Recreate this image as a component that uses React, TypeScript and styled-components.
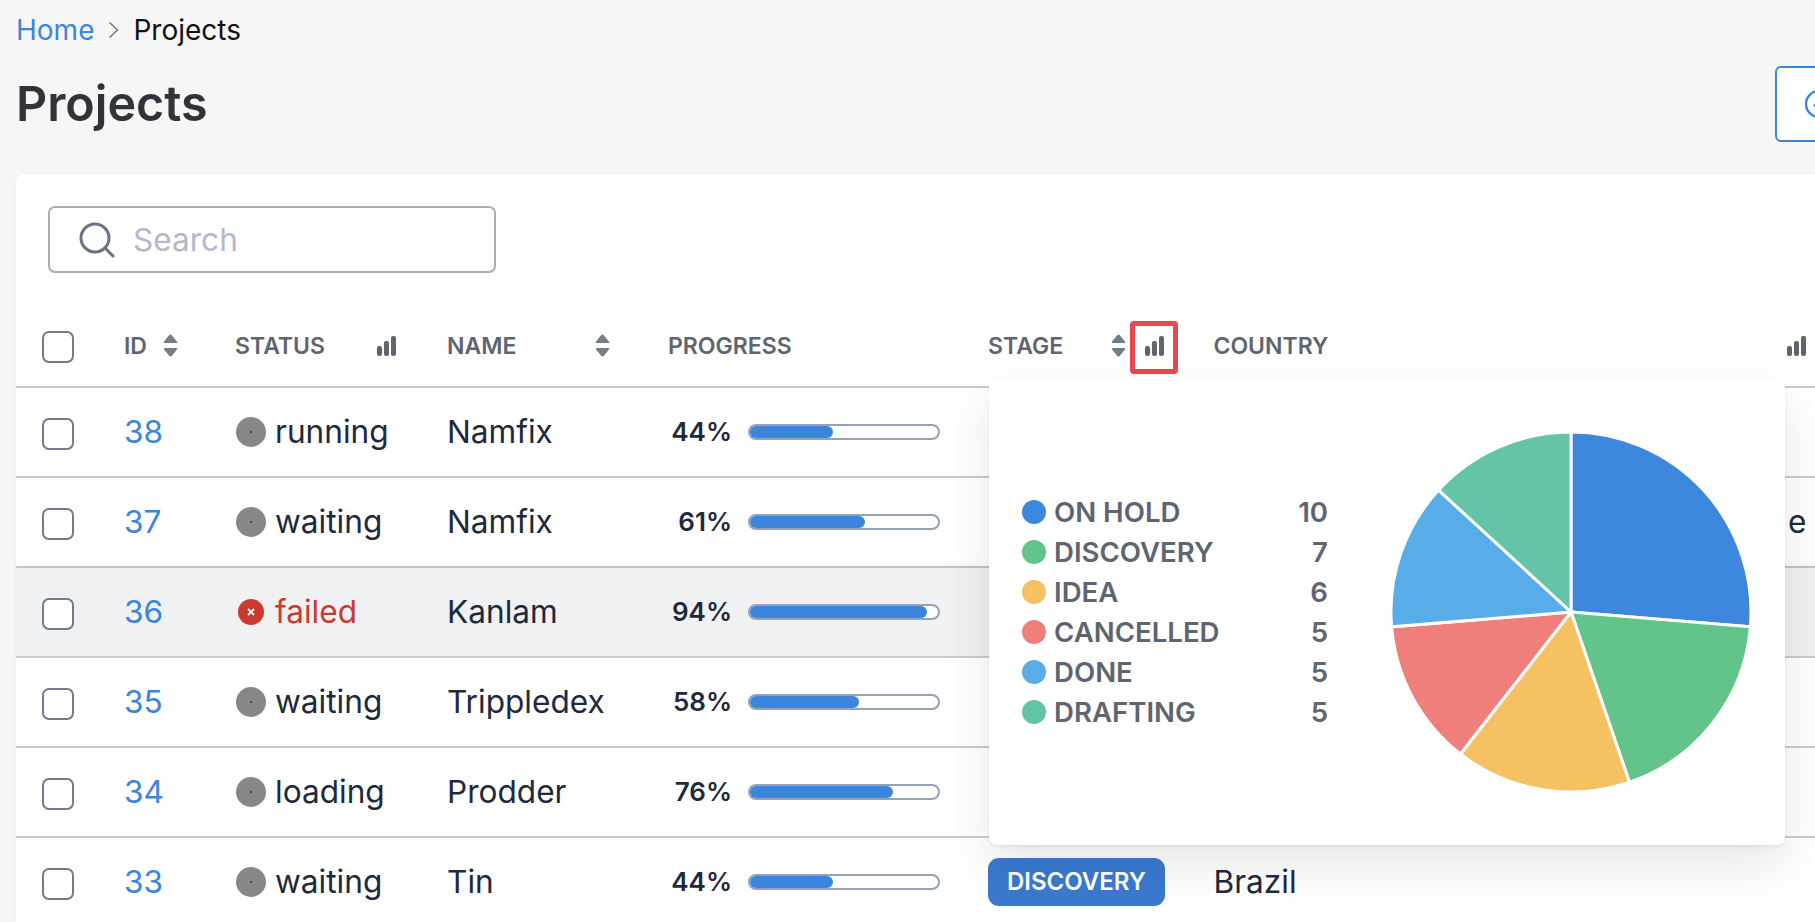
import React from "react"
import styled, { createGlobalStyle } from "styled-components"

const GlobalStyle = createGlobalStyle`
  html, body {
    margin: 0;
    height: 100%;
    overflow: hidden;
    background: #f6f6f6;
  }
  body {
    font-family: Inter, "Noto Sans", "Liberation Sans", sans-serif;
    color: #1e293b;
  }
`

const GRID = "108px 111px 212px 221px 320px 225.5px 643px"

const Page = styled.div`
  width: 1900px;
  padding: 14px 0 0 16px;
  box-sizing: border-box;
`

const Crumbs = styled.nav`
  display: flex;
  align-items: center;
  gap: 14px;
  height: 32px;
  font-size: 28px;
  line-height: 32px;
`

const CrumbLink = styled.a`
  color: #3c85dd;
`

const CrumbCurrent = styled.span`
  color: #111;
`

const TitleRow = styled.div`
  display: flex;
  justify-content: space-between;
  align-items: flex-start;
  height: 128px;
  padding-top: 20px;
  box-sizing: border-box;
`

const Title = styled.h1`
  margin: 10px 0 0;
  font-size: 48.4px;
  line-height: 56px;
  font-weight: 600;
  color: #303339;
`

const ActionButton = styled.button`
  display: flex;
  align-items: center;
  flex: none;
  width: 125px;
  height: 76px;
  padding: 0 0 0 27px;
  box-sizing: border-box;
  border: 2px solid #3c85dd;
  border-radius: 6px;
  background: #fff;
  color: #3c85dd;
`

const Card = styled.section`
  background: #fff;
  border-radius: 8px;
  box-shadow: 0 1px 4px rgba(0, 0, 0, 0.04);
`

const Toolbar = styled.div`
  padding: 32px 0 35px 32px;
`

const SearchBox = styled.div`
  display: flex;
  align-items: center;
  gap: 18px;
  width: 448px;
  height: 67px;
  padding-left: 29px;
  box-sizing: border-box;
  border: 2px solid #a8adb6;
  border-radius: 7px;
  color: #6b7280;
`

const Placeholder = styled.span`
  font-size: 31.6px;
  color: #b6b6cc;
`

const Row = styled.div<{ $head?: boolean; $active?: boolean }>`
  display: grid;
  grid-template-columns: ${GRID};
  align-items: center;
  height: ${(p) => (p.$head ? 80 : 90)}px;
  box-sizing: border-box;
  border-bottom: 2px solid #cacad0;
  background: ${(p) => (p.$active ? "#f0f1f3" : "transparent")};
  box-shadow: ${(p) => (p.$active ? "0 -6px 10px -4px rgba(0, 0, 0, 0.06)" : "none")};
`

const HeadCell = styled.div<{ $pad?: number }>`
  position: relative;
  display: flex;
  align-items: center;
  justify-content: space-between;
  padding-right: ${(p) => p.$pad ?? 0}px;
  padding-bottom: 3px;
  font-size: 23px;
  font-weight: 600;
  color: #5f6570;
`

const CheckCell = styled.div<{ $body?: boolean }>`
  padding-left: 26px;
  padding-top: ${(p) => (p.$body ? 3 : 0)}px;
`

const Check = styled.span`
  display: block;
  width: 32px;
  height: 32px;
  box-sizing: border-box;
  border: 2px solid #727a8b;
  border-radius: 7px;
  background: #fff;
`

const IconPair = styled.span`
  display: flex;
  align-items: center;
  gap: 19px;
`

const Highlight = styled.span`
  position: relative;
  display: flex;

  &::after {
    content: "";
    position: absolute;
    left: -15px;
    top: -15px;
    width: 48px;
    height: 53px;
    box-sizing: border-box;
    border: 5px solid #e8484e;
    border-radius: 4px;
  }
`

const IdLink = styled.a`
  padding-bottom: 2px;
  font-size: 31.6px;
  color: #3c85dd;
`

const Status = styled.div<{ $failed?: boolean }>`
  display: flex;
  align-items: center;
  gap: 9px;
  padding-bottom: 2px;
  font-size: 31.6px;
  color: ${(p) => (p.$failed ? "#cc3a2f" : "#1e293b")};
`

const StatusDot = styled.span<{ $failed?: boolean }>`
  display: flex;
  align-items: center;
  justify-content: center;
  width: ${(p) => (p.$failed ? 26 : 30)}px;
  height: ${(p) => (p.$failed ? 26 : 30)}px;
  margin: 2px ${(p) => (p.$failed ? 2 : 0)}px 0 ${(p) => (p.$failed ? 3 : 1)}px;
  border-radius: 50%;
  background: ${(p) => (p.$failed ? "#cc3a2f" : "#878787")};
`

const Pip = styled.span`
  width: 2px;
  height: 2px;
  border-radius: 50%;
  background: #3a3a3a;
`

const Text = styled.div<{ $end?: boolean }>`
  padding-bottom: 2px;
  font-size: 31.6px;
  white-space: nowrap;
  text-align: ${(p) => (p.$end ? "right" : "left")};
  padding-right: ${(p) => (p.$end ? 50 : 0)}px;
`

const ProgressCell = styled.div`
  display: flex;
  align-items: center;
  gap: 16px;
`

const Percent = styled.span`
  width: 64px;
  padding-bottom: 2px;
  text-align: right;
  font-size: 26px;
  font-weight: 600;
  white-space: nowrap;
`

const Track = styled.div`
  width: 192px;
  height: 16px;
  box-sizing: border-box;
  border: 2px solid #94a1b8;
  border-radius: 8px;
  background: #fff;
`

const Fill = styled.div`
  height: 12px;
  border-radius: 6px;
  background: #3c85dd;
`

const StageChip = styled.span`
  display: inline-block;
  padding: 0 19px;
  height: 48px;
  line-height: 48px;
  border-radius: 11px;
  background: #397ad0;
  color: #fff;
  font-size: 24px;
  font-weight: 600;
`

const Popover = styled.div`
  position: absolute;
  left: 1px;
  top: 47px;
  z-index: 5;
  display: flex;
  align-items: center;
  justify-content: space-between;
  width: 796px;
  height: 466px;
  padding: 0 33px;
  box-sizing: border-box;
  background: #fff;
  border-radius: 8px;
  box-shadow: 0 2px 3px rgba(0, 0, 0, 0.06), 0 20px 50px rgba(0, 0, 0, 0.1);
`

const Legend = styled.ul`
  list-style: none;
  margin: 0;
  padding: 0;
  width: 306px;
`

const LegendRow = styled.li`
  display: flex;
  align-items: center;
  height: 40px;
  gap: 8px;
  font-size: 27.6px;
  font-weight: 600;
  color: #5f6570;
`

const LegendDot = styled.span<{ $color: string }>`
  width: 24px;
  height: 24px;
  border-radius: 50%;
  background: ${(p) => p.$color};
`

const LegendCount = styled.span`
  margin-left: auto;
`

const BarsIcon = () => (
  <svg width="19" height="20" viewBox="0 0 19 20" fill="currentColor">
    <rect x="0" y="10" width="5" height="10" rx="2" />
    <rect x="7" y="5" width="5" height="15" rx="2" />
    <rect x="14" y="0" width="5" height="20" rx="2" />
  </svg>
)

const SortIcon = () => (
  <svg width="15" height="23" viewBox="0 0 15 23" fill="#757c8a">
    <path d="M6.4 1 1 7.4c-.6.8-.1 1.6.8 1.6h11.4c.9 0 1.4-.8.8-1.6L8.6 1c-.6-.7-1.6-.7-2.2 0z" />
    <path d="M6.4 22 1 15.6c-.6-.8-.1-1.6.8-1.6h11.4c.9 0 1.4.8.8 1.6L8.6 22c-.6.7-1.6.7-2.2 0z" />
  </svg>
)

const ChevronIcon = () => (
  <svg width="11" height="18" viewBox="0 0 11 18" fill="none" stroke="#6b7280" strokeWidth="1.4">
    <path d="M1.5 1.5 9.5 9l-8 7.5" />
  </svg>
)

const SearchIcon = () => (
  <svg width="36" height="36" viewBox="0 0 36 36" fill="none" stroke="currentColor" strokeWidth="3">
    <circle cx="16" cy="16" r="14" />
    <path d="M26 26l8 8" strokeLinecap="round" />
  </svg>
)

const CircleIcon = () => (
  <svg width="30" height="30" viewBox="0 0 30 30" fill="none" stroke="currentColor" strokeWidth="2.4">
    <circle cx="15" cy="15" r="13" />
    <path d="M10 15.5l3.5 3.5 6.5-7" />
  </svg>
)

const slices = [
  { label: "ON HOLD", value: 10, color: "#3d87dd" },
  { label: "DISCOVERY", value: 7, color: "#62c48a" },
  { label: "IDEA", value: 6, color: "#f6c163" },
  { label: "CANCELLED", value: 5, color: "#f07e7b" },
  { label: "DONE", value: 5, color: "#58ade8" },
  { label: "DRAFTING", value: 5, color: "#63c4a8" },
]

const PieChart = () => {
  const total = slices.reduce((sum, s) => sum + s.value, 0)
  const r = 180
  let angle = -Math.PI / 2
  return (
    <svg width="362" height="362" viewBox="-181 -181 362 362">
      {slices.map((s) => {
        const next = angle + (s.value / total) * Math.PI * 2
        const d = `M0 0L${r * Math.cos(angle)} ${r * Math.sin(angle)}A${r} ${r} 0 0 1 ${r * Math.cos(next)} ${r * Math.sin(next)}Z`
        angle = next
        return <path key={s.label} d={d} fill={s.color} stroke="#fff" strokeWidth="3" />
      })}
    </svg>
  )
}

// row 37's country is hidden by the popover, only its last letter shows
const rows = [
  { id: 38, status: "running", name: "Namfix", progress: 44 },
  { id: 37, status: "waiting", name: "Namfix", progress: 61, tail: "e" },
  { id: 36, status: "failed", name: "Kanlam", progress: 94 },
  { id: 35, status: "waiting", name: "Trippledex", progress: 58 },
  { id: 34, status: "loading", name: "Prodder", progress: 76 },
  { id: 33, status: "waiting", name: "Tin", progress: 44, stage: "DISCOVERY", country: "Brazil" },
]

const App: React.FC = () => (
  <>
    <GlobalStyle />
    <Page>
      <Crumbs>
        <CrumbLink>Home</CrumbLink>
        <ChevronIcon />
        <CrumbCurrent>Projects</CrumbCurrent>
      </Crumbs>
      <TitleRow>
        <Title>Projects</Title>
        <ActionButton>
          <CircleIcon />
        </ActionButton>
      </TitleRow>
      <Card>
        <Toolbar>
          <SearchBox>
            <SearchIcon />
            <Placeholder>Search</Placeholder>
          </SearchBox>
        </Toolbar>
        <Row $head>
          <CheckCell>
            <Check />
          </CheckCell>
          <HeadCell $pad={57}>
            ID
            <SortIcon />
          </HeadCell>
          <HeadCell $pad={51}>
            STATUS
            <BarsIcon />
          </HeadCell>
          <HeadCell $pad={58}>
            NAME
            <SortIcon />
          </HeadCell>
          <HeadCell>PROGRESS</HeadCell>
          <HeadCell $pad={50}>
            STAGE
            <IconPair>
              <SortIcon />
              <Highlight>
                <BarsIcon />
              </Highlight>
            </IconPair>
            <Popover>
              <Legend>
                {slices.map((s) => (
                  <LegendRow key={s.label}>
                    <LegendDot $color={s.color} />
                    {s.label}
                    <LegendCount>{s.value}</LegendCount>
                  </LegendRow>
                ))}
              </Legend>
              <PieChart />
            </Popover>
          </HeadCell>
          <HeadCell $pad={51}>
            COUNTRY
            <BarsIcon />
          </HeadCell>
        </Row>
        {rows.map((row) => {
          const failed = row.status === "failed"
          return (
            <Row key={row.id} $active={failed}>
              <CheckCell $body>
                <Check />
              </CheckCell>
              <IdLink>{row.id}</IdLink>
              <Status $failed={failed}>
                <StatusDot $failed={failed}>
                  {failed ? (
                    <svg width="10" height="10" viewBox="0 0 10 10" stroke="#fff" strokeWidth="1.8">
                      <path d="M2 2l6 6M8 2l-6 6" />
                    </svg>
                  ) : (
                    <Pip />
                  )}
                </StatusDot>
                {row.status}
              </Status>
              <Text>{row.name}</Text>
              <ProgressCell>
                <Percent>{row.progress}%</Percent>
                <Track>
                  <Fill style={{ width: `${row.progress}%` }} />
                </Track>
              </ProgressCell>
              <div>{row.stage && <StageChip>{row.stage}</StageChip>}</div>
              <Text $end={!!row.tail}>{row.tail ?? row.country}</Text>
            </Row>
          )
        })}
      </Card>
    </Page>
  </>
)

export default App
